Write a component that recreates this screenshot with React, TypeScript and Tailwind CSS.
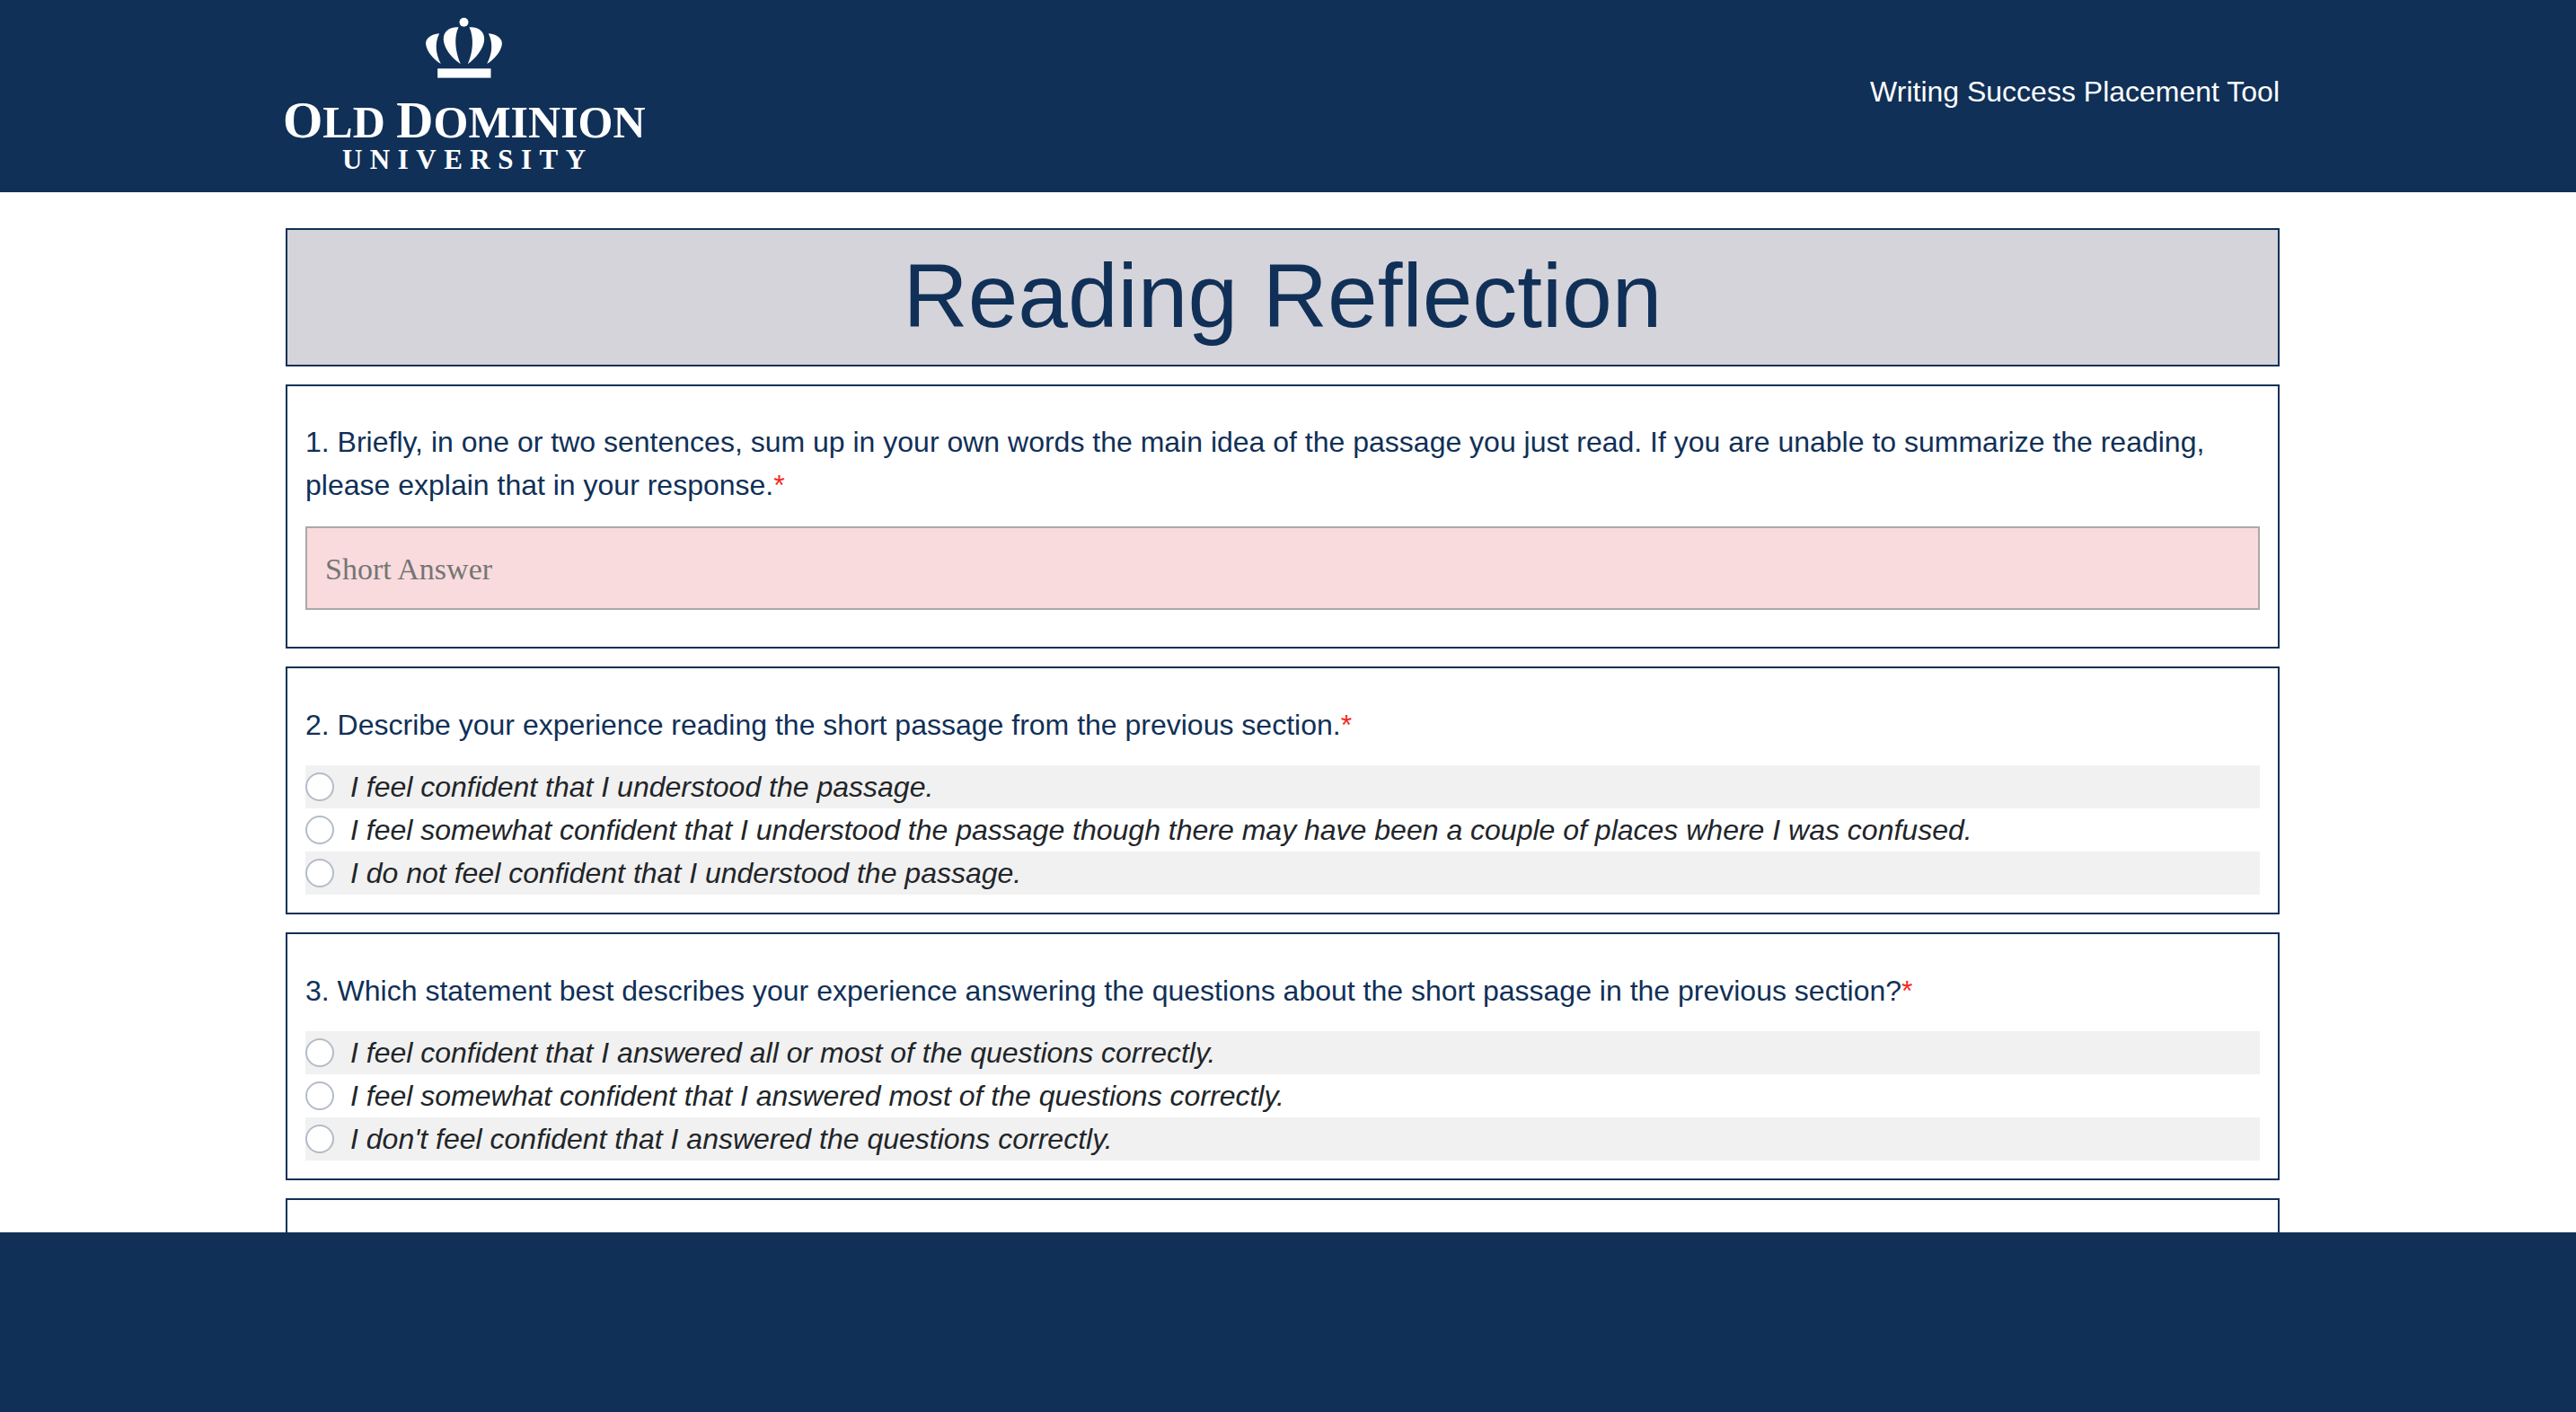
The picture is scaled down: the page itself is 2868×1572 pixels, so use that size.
const questions = [
  {
    title: "2. Describe your experience reading the short passage from the previous section.",
    options: [
      "I feel confident that I understood the passage.",
      "I feel somewhat confident that I understood the passage though there may have been a couple of places where I was confused.",
      "I do not feel confident that I understood the passage.",
    ],
  },
  {
    title: "3. Which statement best describes your experience answering the questions about the short passage in the previous section?",
    options: [
      "I feel confident that I answered all or most of the questions correctly.",
      "I feel somewhat confident that I answered most of the questions correctly.",
      "I don't feel confident that I answered the questions correctly.",
    ],
  },
];

function Crown() {
  return (
    <svg viewBox="580 55 260 210" className="w-[87px] h-[70px]" fill="#ffffff">
      <circle cx="710" cy="75" r="15" />
      <path d="M628 113C600 115 580 130 583 150C587 175 610 200 633 214C618 185 610 150 628 113Z" />
      <path d="M692 92C660 90 640 108 642 135C645 165 670 195 699 215C682 175 675 130 692 92Z" />
      <path d="M728 92C760 90 780 108 778 135C775 165 750 195 723 215C740 175 745 130 728 92Z" />
      <path d="M792 113C820 115 840 130 837 150C833 175 810 200 787 214C802 185 810 150 792 113Z" />
      <rect x="622" y="230" width="178" height="31" />
    </svg>
  );
}

function Logo() {
  return (
    <div className="-ml-[3px] flex flex-col items-center pt-[18px] text-white font-['Liberation_Serif',serif]">
      <Crown />
      <div className="mt-[23px] h-[46px] whitespace-nowrap font-bold leading-[46px] text-[50px]">
        <span className="text-[57px]">O</span>LD <span className="text-[57px]">D</span>OMINION
      </div>
      <div className="mt-[6px] h-[30px] whitespace-nowrap pl-2 leading-[30px] text-[31px] font-bold tracking-[8.5px]">UNIVERSITY</div>
    </div>
  );
}

function Asterisk() {
  return <span className="text-[#f5291c]">*</span>;
}

function RadioQuestion({ title, options }: { title: string; options: string[] }) {
  return (
    <section className="border-2 border-[#103057] px-5 pt-[39px] pb-5">
      <p className="mb-[21px] text-[#103057]">
        {title}
        <Asterisk />
      </p>
      <div>
        {options.map((option, i) => (
          <label key={i} className={`flex h-12 items-center gap-[18px] italic text-[#212529] ${i % 2 === 0 ? "bg-[#f1f1f1]" : ""}`}>
            <input type="radio" name={title} className="size-8 shrink-0 appearance-none rounded-full border-2 border-[#b4bcc8] bg-white" />
            {option}
          </label>
        ))}
      </div>
    </section>
  );
}

export default function App() {
  return (
    <div className="flex h-[1572px] flex-col overflow-hidden bg-white font-['Liberation_Sans',Arial,sans-serif] text-[32px] leading-[48px]">
      {/* Header */}
      <header className="h-[214px] shrink-0 bg-[#103057]">
        <div className="ml-[318px] mr-[330px] flex items-start justify-between">
          <Logo />
          <p className="pt-[78px] text-white">Writing Success Placement Tool</p>
        </div>
      </header>

      {/* Content */}
      <main className="flex min-h-0 flex-1 flex-col gap-5 overflow-hidden pl-[318px] pr-[330px] pt-10">
        <h1 className="flex h-[154px] shrink-0 items-center justify-center border-2 border-[#103057] bg-[#d5d4da] pb-1 text-[100px] leading-none text-[#103057]">
          Reading Reflection
        </h1>

        <section className="border-2 border-[#103057] px-5 pt-[38px] pb-[41px]">
          <p className="mb-[22px] text-[#103057]">
            1. Briefly, in one or two sentences, sum up in your own words the main idea of the passage you just read. If you are unable to summarize the reading, please explain that in your response.
            <Asterisk />
          </p>
          <input
            type="text"
            placeholder="Short Answer"
            className="block h-[93px] w-full border-2 border-[#a9a9a9] bg-[#f9dbdd] px-5 pt-0.5 font-['Liberation_Serif',serif] text-[34px] outline-none placeholder:text-[#757575]"
          />
        </section>

        {questions.map((q) => (
          <RadioQuestion key={q.title} title={q.title} options={q.options} />
        ))}

        <section className="h-[200px] shrink-0 border-2 border-[#103057]" />
      </main>

      {/* Footer */}
      <footer className="h-[200px] shrink-0 bg-[#103057]" />
    </div>
  );
}
